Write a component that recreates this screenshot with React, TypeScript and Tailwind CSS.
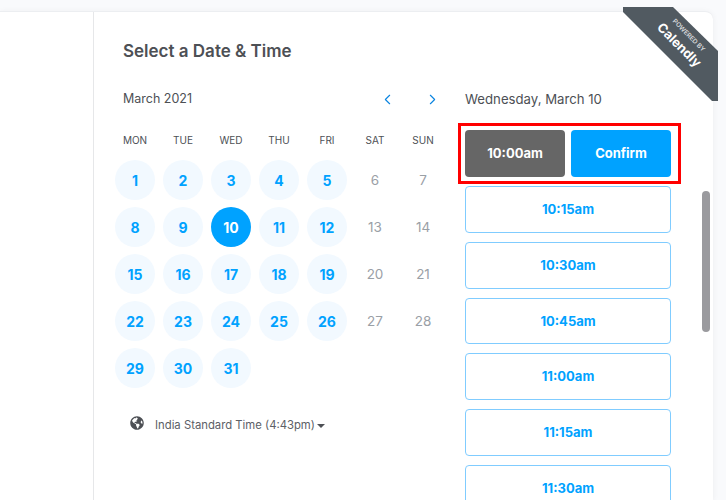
import { FaGlobeAmericas } from "react-icons/fa";
import { LuChevronLeft, LuChevronRight } from "react-icons/lu";

const weekdays = ["MON", "TUE", "WED", "THU", "FRI", "SAT", "SUN"];
const slots = ["10:15am", "10:30am", "10:45am", "11:00am", "11:15am", "11:30am"];
const disabledDays = [6, 7, 13, 14, 20, 21, 27, 28];
const days = Array.from({ length: 31 }, (_, i) => i + 1);

function Day({ day }: { day: number }) {
  if (disabledDays.includes(day)) {
    return (
      <div className="h-10 flex items-center justify-center text-[13.5px] text-[#9aa0a6]">
        {day}
      </div>
    );
  }
  const selected = day === 10;
  return (
    <div
      className={`w-10 h-10 mx-auto rounded-full flex items-center justify-center text-[14px] font-bold ${
        selected ? "bg-[#00a2ff] text-white" : "bg-[#f2f9ff] text-[#00a2ff]"
      }`}
    >
      {day}
    </div>
  );
}

export default function App() {
  return (
    <div
      className="relative w-[726px] h-[500px] overflow-hidden bg-[#f9fafc] pt-[11px] pr-[13px]"
      style={{ fontFamily: 'Inter, "Liberation Sans", sans-serif' }}
    >
      {/* Card */}
      <div className="flex h-[489px] bg-white rounded-tr-lg border-t border-[#eceef1] shadow-[0_1px_6px_rgba(0,0,0,0.06)]">
        <aside className="w-[94px] shrink-0 border-r border-[#e6e7e9]" />

        <main className="flex-1 pl-[17px]">
          <h1 className="pl-[12px] pt-[29px] h-[61px] text-[17px] leading-5 font-semibold text-[#4d5055]">
            Select a Date &amp; Time
          </h1>

          <div className="flex">
            {/* Calendar */}
            <section className="w-[336px] shrink-0">
              <div className="flex items-center h-6 pl-[12px] mt-[14px]">
                <span className="w-[257px] shrink-0 text-[12.5px] text-[#4d5055]">March 2021</span>
                <LuChevronLeft className="-ml-[1px] text-[#0a84e0] text-[17px] [&_path]:stroke-[1.6]" />
                <LuChevronRight className="ml-[28px] text-[#0a84e0] text-[17px] [&_path]:stroke-[1.6]" />
              </div>

              <div className="grid grid-cols-7 mt-[19px] mb-[10px] h-[20px] items-center text-center text-[10px] text-[#4d5055]">
                {weekdays.map((w) => (
                  <span key={w}>{w}</span>
                ))}
              </div>

              <div className="grid grid-cols-[repeat(7,48px)] gap-y-[7px]">
                {days.map((d) => (
                  <Day key={d} day={d} />
                ))}
              </div>

              <div className="flex items-center mt-[29px] pl-[19px] text-[#4d5055]">
                <FaGlobeAmericas className="text-[14px] -mt-1" />
                <span className="ml-[11px] text-[11.3px] text-[#5c6066]">
                  India Standard Time (4:43pm)
                </span>
                <span className="ml-[2px] mt-px border-x-[4px] border-t-[4px] border-x-transparent border-t-[#4d5055]" />
              </div>
            </section>

            {/* Time slots */}
            <section className="w-[206px] ml-[18px] shrink-0">
              <div className="h-6 mt-[15px] flex items-center text-[13.2px] text-[#4d5055]">
                Wednesday, March 10
              </div>

              <div className="relative flex gap-[6px] mt-[18px] mb-[9px] text-[13px] font-bold text-white">
                <button className="w-[100px] h-[47px] rounded bg-[#666666] pt-px">10:00am</button>
                <button className="w-[100px] h-[47px] rounded bg-[#00a2ff] pt-px">Confirm</button>
                <div className="absolute -left-[7px] -top-[7px] w-[223px] h-[61px] border-[3px] border-[#ff0000]" />
              </div>

              <div className="flex flex-col gap-[9px]">
                {slots.map((s) => (
                  <button
                    key={s}
                    className="h-[46.75px] shrink-0 rounded border border-[#80ccff] pt-px text-[13px] font-bold text-[#00a2ff]"
                  >
                    {s}
                  </button>
                ))}
              </div>
            </section>
          </div>
        </main>
      </div>

      {/* Scrollbar */}
      <div className="absolute left-[702px] top-[191px] w-2 h-[141px] rounded-full bg-[#9a9a9e]" />

      {/* Powered by ribbon */}
      <div className="absolute left-[623px] top-[7px] w-[95px] h-[94px]">
        <svg width="95" height="94" className="absolute inset-0">
          <polygon points="0,0 50,0 95,44 95,94 89,94 0,5" fill="#515a61" />
        </svg>
        <div className="absolute left-[27px] top-[23px] w-[66px] rotate-45 text-center text-white leading-none">
          <div className="text-[6.5px] font-semibold text-[#d5d8da]">POWERED BY</div>
          <div className="text-[13px] font-bold mt-[3px]">Calendly</div>
        </div>
      </div>
    </div>
  );
}
